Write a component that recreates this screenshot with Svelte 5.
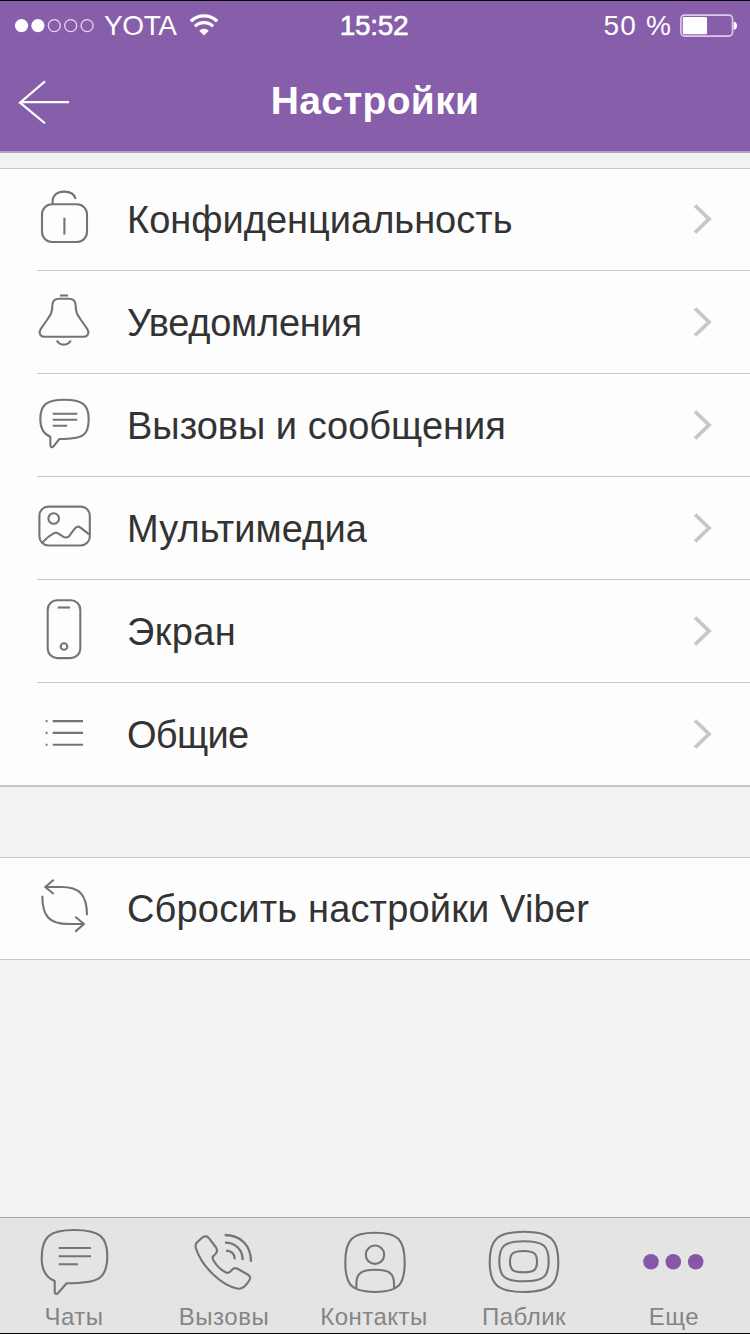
<script lang="ts">
  const rows = [
    { icon: "lock", label: "Конфиденциальность", spacing: 0 },
    { icon: "bell", label: "Уведомления", spacing: -0.25 },
    { icon: "chat", label: "Вызовы и сообщения", spacing: 0 },
    { icon: "media", label: "Мультимедиа", spacing: 0.1 },
    { icon: "screen", label: "Экран", spacing: 0.4 },
    { icon: "list", label: "Общие", spacing: -0.7 },
  ];

  const tabs = [
    { icon: "chats", label: "Чаты" },
    { icon: "calls", label: "Вызовы" },
    { icon: "contacts", label: "Контакты" },
    { icon: "public", label: "Паблик" },
    { icon: "more", label: "Еще" },
  ];

  const signal = [true, true, false, false, false];
</script>

<div class="app">
  <header class="header">
    <div class="status">
      <div class="carrier">
        <svg class="signal" width="84" height="16" viewBox="0 0 84 16">
          {#each signal as on, i}
            <circle cx={8.5 + i * 16.4} cy="7.6" r={on ? 6.6 : 6} fill={on ? "#fff" : "none"} stroke={on ? "none" : "#e6d9f0"} stroke-width="1.3" />
          {/each}
        </svg>
        <span class="operator">YOTA</span>
        <svg class="wifi" width="30" height="24" viewBox="0 0 30 24">
          <path d="M1.8 7.3a18.8 18.8 0 0 1 26.4 0" fill="none" stroke="#fff" stroke-width="3.4" />
          <path d="M6 12.4a12.8 12.8 0 0 1 18 0" fill="none" stroke="#fff" stroke-width="3.2" />
          <path d="M15 21.5l-4.8-4.8a6.8 6.8 0 0 1 9.6 0z" fill="#fff" />
        </svg>
      </div>
      <span class="time">15:52</span>
      <div class="power">
        <span class="percent">50 %</span>
        <svg width="58" height="24" viewBox="0 0 58 24">
          <rect x="0.9" y="1.1" width="51.6" height="21" rx="3.6" fill="none" stroke="#dfc8ee" stroke-width="1.6" />
          <rect x="2.8" y="3" width="24.2" height="17.2" rx="1.2" fill="#fff" />
          <path d="M53.6 7.8c4.6 0 4.6 8 0 8z" fill="#fff" />
        </svg>
      </div>
    </div>
    <div class="nav">
      <svg class="back" width="52" height="46" viewBox="0 0 52 46">
        <path d="M51 24.2H2.5M27 3.4L2 24.7l25 20.6" fill="none" stroke="#fff" stroke-width="2.2" />
      </svg>
      <h1 class="title">Настройки</h1>
    </div>
  </header>

  <ul class="list">
    {#each rows as row}
      <li class="row">
        <svg class="icon" width="64" height="101" viewBox="0 0 64 101">
          {#if row.icon == "lock"}
            <rect x="10" y="35.3" width="45" height="37.7" rx="10" />
            <path d="M20.6 35v-2.5c0-6 4.4-9.9 11.4-9.9 6.5 0 10.6 2.6 11.7 7.4M32.4 48.7v16.8" />
          {:else if row.icon == "bell"}
            <path d="M28 24.5h8" />
            <path d="M27 27.7h10c4 0 6.4 2.3 6.6 6.3.2 7.5 1.6 9.5 4.7 14l6.9 9.9c2.4 4 .8 7.9-3.7 7.9h-39c-4.500 0-6.1-3.9-3.7-7.900L15.700 48c3.1-4.5 4.5-6.5 4.7-14 .2-4 2.6-6.3 6.600-6.300z" />
            <path d="M24.8 69.500c3.2 5.500 10.800 5.500 14 0" />
          {:else if row.icon == "chat"}
            <path d="M18.3 62.7C11.3 60 8.3 54.500 8.300 45c0-14.500 6.700-19.300 24.200-19.300S56.700 30.500 56.700 45c0 17-6.700 19.500-24.400 20h-5l-5.700 7.300c-1.500 1.500-3.200 1-3.200-.8z" />
            <path d="M20.7 39.8h24.500M20.7 45.700h24.500M20.7 51.700h14.500" />
          {:else if row.icon == "media"}
            <rect x="7.4" y="29.6" width="50.4" height="38.9" rx="9" />
            <circle cx="21.7" cy="41.5" r="5.3" />
            <path d="M10.200 65.600q5.500-6 11.300-9.200 2.500-1.400 5 .2l5 3.300q3 1.600 5.800-1l5.400-7.200q2.800-3.500 5.800-1l8.600 6.700" />
          {:else if row.icon == "screen"}
            <rect x="15.7" y="20.3" width="32.6" height="57.8" rx="9.5" />
            <path d="M25.7 27.5H38" />
            <circle cx="32" cy="66.5" r="3.3" />
          {:else}
            <path d="M20.7 38.1H51M20.7 49.9H51M20.7 61.7H51M13.7 38.1h1.8M13.7 49.900h1.800M13.700 61.700h1.800" />
          {/if}
        </svg>
        <span class="label" style="letter-spacing: {row.spacing}px">{row.label}</span>
        <svg class="chevron" width="20" height="32" viewBox="0 0 20 32">
          <path d="M2 2.5L16 16 2 29.5" fill="none" stroke="#c7c7c7" stroke-width="3.8" />
        </svg>
      </li>
    {/each}
  </ul>

  <ul class="list reset">
    <li class="row">
      <svg class="icon" width="64" height="101" viewBox="0 0 64 101">
        <path d="M21.7 21.8L13.2 29l8.5 7M13.2 29h16C47 29 55 36 55 57.3" />
        <path d="M43.3 58.7L52 66l-8.7 7.6M52 66H36.500C17 66 10.300 58 10.300 37.700" />
      </svg>
      <span class="label">Сбросить настройки Viber</span>
    </li>
  </ul>

  <nav class="tabs">
    {#each tabs as tab}
      <a class="tab" href="#{tab.icon}">
        <svg class="icon" width="150" height="84" viewBox="0 0 150 84">
          {#if tab.icon == "chats"}
            <path d="M54.7 63C45.5 59.5 41.700 52.500 41.700 40c0-21 7.500-28 32.800-28s32.800 7 32.800 26c0 24-10 27-40.600 27.300l-8.700 9.700c-1.500 1.500-3.300 1-3.300-1.200z" />
            <path d="M58.7 30H91M58.7 38.3H91M58.7 46.3h19.200" />
          {:else if tab.icon == "calls"}
            <path d="M46.800 24.500l5-4.500c2.800-2.500 5.500-2 7.700.8l6.500 8.700c1.800 2.800 1.300 4.800-.8 6.700-2.800 2.300-3.300 3.500-1.700 6.300 3.500 6 7.500 9.500 12.500 12 2.300 1 3.500.5 5.500-2.200 1.700-2.300 4-2.700 6.500-1.300l9.700 5.500c2.700 1.500 3 3.500 1.500 6-2.700 4.500-5.700 8.800-11.200 8.200C71 67.500 51.500 48 46 30.500c-.8-2.500-.5-4.500.8-6z" />
            <path d="M74.7 17c16 0 26.300 10.500 26.300 26.700M75 24.700c10.500 0 17.700 7 17.700 17.300M76 32.700c5.500.3 8.700 3.300 8.800 8.500" stroke-width="2.3" />
          {:else if tab.icon == "contacts"}
            <path d="M75 14.7c23 0 29.700 6.600 29.700 29.700S98 74 75 74 45.300 67.500 45.300 44.400 52 14.700 75 14.700z" />
            <circle cx="75" cy="36.7" r="9.2" />
            <path d="M56.4 70v-5c0-9.500 5-13.300 18.800-13.300S94 55.500 94 65v5" />
          {:else if tab.icon == "public"}
            <path d="M74 13.7c27 0 34.300 8 34.300 30.200S101 74 74 74 39.700 66 39.700 43.900 47 13.700 74 13.700z" />
            <path d="M74 23.300c19.500 0 24.700 4.700 24.700 20s-5.200 20-24.700 20-24.700-4.700-24.700-20 5.200-20 24.700-20z" />
            <path d="M73.500 33C84 33 87 35.500 87 43.700s-3 10.600-13.500 10.600S60 51.900 60 43.700 63 33 73.500 33z" />
          {:else}
            <g class="dots">
              <circle cx="51" cy="43.7" r="7.8" />
              <circle cx="73.3" cy="43.7" r="7.8" />
              <circle cx="95.7" cy="43.7" r="7.8" />
            </g>
          {/if}
        </svg>
        <span class="tabLabel">{tab.label}</span>
      </a>
    {/each}
  </nav>
</div>

<style>
  :global(body) {
    background-color: #f2f2f2;
  }

  .app {
    box-sizing: border-box;
    display: flex;
    flex-direction: column;
    width: 750px;
    height: 1334px;
    border-top: 1px solid black;
    border-bottom: 1px solid black;
    background-color: #f2f2f2;
    font-family: "Liberation Sans", Arial, sans-serif;
    overflow: hidden;
  }

  .header {
    box-sizing: border-box;
    height: 152px;
    background-color: #875eaa;
    border-bottom: 2px solid #b5a0bb;
    color: white;
  }

  .status {
    display: grid;
    grid-template-columns: 1fr auto 1fr;
    align-items: center;
    height: 50px;
    padding: 0 12px 0 13px;
    font-size: 28px;
    line-height: 50px;
  }

  .carrier,
  .power {
    display: flex;
    align-items: center;
  }

  .power {
    justify-content: flex-end;
    gap: 8px;
  }

  .operator {
    margin: 0 12px 0 7px;
    letter-spacing: -0.4px;
  }

  .percent {
    letter-spacing: 1.2px;
  }

  .time {
    letter-spacing: -0.3px;
    margin-right: 3px;
    -webkit-text-stroke: 0.6px white;
  }

  .nav {
    display: grid;
    grid-template-columns: 60px 1fr 60px;
    align-items: center;
    height: 100px;
    padding: 0 18px;
  }

  .title {
    margin: 0;
    font-size: 39px;
    letter-spacing: 0.3px;
    line-height: 100px;
    text-align: center;
  }

  .list {
    list-style: none;
    margin: 15px 0 0;
    padding: 0;
    background-color: #fdfdfd;
    border-top: 1px solid #c8c8c8;
    border-bottom: 2px solid #c8c8c8;
  }

  .row {
    box-sizing: border-box;
    display: flex;
    align-items: center;
    height: 103px;
    margin-left: 37px;
    padding-right: 37px;
    border-bottom: 1px solid #c8c8c8;
  }

  .row:first-child {
    height: 102px;
  }

  .row:last-child {
    height: 102px;
    border-bottom: none;
  }

  .row .icon {
    align-self: flex-start;
    margin-left: -5px;
  }

  .icon {
    flex: none;
    fill: none;
    stroke: #747474;
    stroke-width: 2.1;
    stroke-linecap: butt;
    stroke-linejoin: round;
  }

  .label {
    flex: 1;
    margin-left: 31px;
    padding-top: 2px;
    color: #333;
    font-size: 38px;
    white-space: nowrap;
  }

  .chevron {
    margin-bottom: 1px;
  }

  .list.reset {
    margin-top: 70px;
    border-bottom-width: 1px;
  }

  .reset .row:last-child {
    height: 101px;
  }

  .reset .label {
    letter-spacing: 0.17px;
  }

  .tabs {
    display: flex;
    height: 115px;
    margin-top: auto;
    background-color: #e4e4e4;
    border-top: 1px solid #a8a8a8;
  }

  .tab {
    display: flex;
    flex: 1;
    flex-direction: column;
    align-items: center;
    color: #858585;
    font-size: 24px;
    letter-spacing: 0.5px;
    text-decoration: none;
  }

  .tabLabel {
    margin-right: 2px;
    line-height: 29px;
  }

  .dots {
    fill: #8657a8;
    stroke: none;
  }
</style>
